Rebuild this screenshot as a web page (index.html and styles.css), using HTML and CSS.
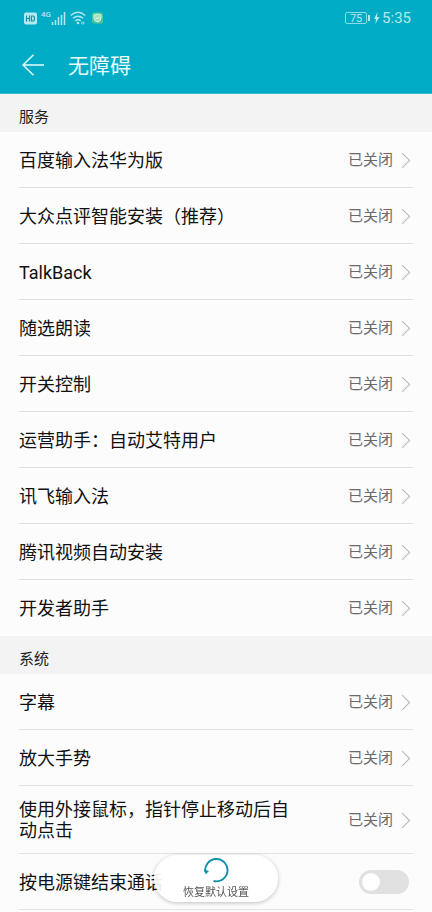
FILE: index.html
```html
<!DOCTYPE html>
<html lang="zh-CN">
<head>
<meta charset="utf-8">
<meta name="viewport" content="width=device-width, initial-scale=1">
<title>无障碍</title>
<link rel="stylesheet" href="styles.css">
</head>
<body>
<header class="top">
  <div class="status">
    <div class="status-left">
      <svg width="13" height="13" viewBox="0 0 13 13"><rect y=".5" width="13" height="12" rx="2" fill="#b5e8f0"/><path d="M2.500 3.500v6M5.500 3.500v6M2.500 6.500h3M7.500 4v5h1.500q1.500 0 1.500-2.500t-1.500-2.500z" fill="none" stroke="#1593a6" stroke-width="1.200"/></svg>
      <span class="network"><span class="gen">4G</span><svg width="15" height="14" viewBox="0 0 15 14"><path d="M1.500 11v3M4.500 9v5M7.500 6v8M10.500 4v10M13.500 1v13" stroke="#b5e8f0" stroke-width="1.500"/></svg></span>
      <svg class="wifi" width="16" height="14" viewBox="0 0 16 14"><g fill="none" stroke="#b5e8f0" stroke-width="1.400"><path d="M.7 4.500q7.300-6.500 14.600 0M3 7.300q5-4.300 10 0M5.300 10q2.700-2.300 5.400 0"/></g><circle cx="8" cy="12" r="1.300" fill="#b5e8f0"/><path d="M11 12l1.300-2v4zM13.300 10v4l1.300-2z" fill="#b5e8f0"/></svg>
      <svg width="11" height="12" viewBox="0 0 11 12"><rect y=".5" width="11" height="11" rx="2" fill="#4fc49a"/><path d="M5.500 2l3.500 1v3q0 3-3.500 4Q2 9 2 6V3z" fill="#9fe0bd" stroke="#d9f5e4" stroke-width="1"/><path d="M4 5.500l1.300 1.500L7.300 5" fill="none" stroke="#eefaf2"/></svg>
    </div>
    <div class="status-right">
      <span class="battery">75</span>
      <svg width="7" height="12" viewBox="0 0 7 12"><path d="M4.500 0L1 7h2l-.7 5L6.500 5H4z" fill="#b5e8f0"/></svg>
      <time class="clock">5:35</time>
    </div>
  </div>
  <div class="appbar">
    <button class="back" type="button" aria-label="返回"><svg width="22" height="22" viewBox="0 0 22 22"><path d="M11.500.8L1 11l10.500 10.200M1 11h21" fill="none" stroke="#e8fbfd" stroke-width="1.500"/></svg></button>
    <h1>无障碍</h1>
  </div>
</header>
<main>
  <section>
    <h2>服务</h2>
    <ul>
      <li><a class="row" href="#"><span class="label">百度输入法华为版</span><span class="value">已关闭</span></a></li>
      <li><a class="row" href="#"><span class="label">大众点评智能安装（推荐）</span><span class="value">已关闭</span></a></li>
      <li><a class="row" href="#"><span class="label">TalkBack</span><span class="value">已关闭</span></a></li>
      <li><a class="row" href="#"><span class="label">随选朗读</span><span class="value">已关闭</span></a></li>
      <li><a class="row" href="#"><span class="label">开关控制</span><span class="value">已关闭</span></a></li>
      <li><a class="row" href="#"><span class="label">运营助手：自动艾特用户</span><span class="value">已关闭</span></a></li>
      <li><a class="row" href="#"><span class="label">讯飞输入法</span><span class="value">已关闭</span></a></li>
      <li><a class="row" href="#"><span class="label">腾讯视频自动安装</span><span class="value">已关闭</span></a></li>
      <li><a class="row" href="#"><span class="label">开发者助手</span><span class="value">已关闭</span></a></li>
    </ul>
  </section>
  <section>
    <h2>系统</h2>
    <ul class="ruled">
      <li><a class="row" href="#"><span class="label">字幕</span><span class="value">已关闭</span></a></li>
      <li><a class="row" href="#"><span class="label">放大手势</span><span class="value">已关闭</span></a></li>
      <li><a class="row" href="#"><span class="label">使用外接鼠标，指针停止移动后自动点击</span><span class="value">已关闭</span></a></li>
      <li><label class="row"><span class="label">按电源键结束通话</span><input class="switch" type="checkbox" role="switch"></label></li>
    </ul>
  </section>
</main>
<button class="restore" type="button">
  <svg width="26" height="26" viewBox="0 0 26 26"><path d="M2.300 15A11.200 11.200 0 1 1 10.500 24" fill="none" stroke="#168fa8" stroke-width="1.900"/><path d="M1.200 12.500l4.800 1.500-3.300 3.500z" fill="#168fa8"/></svg>
  <span>恢复默认设置</span>
</button>
</body>
</html>
```
FILE: styles.css
```css
* {
  box-sizing: border-box;
}

body {
  margin: 0;
  background: #fcfcfc;
  color: #111;
  font-family: Roboto, "Noto Sans CJK SC", sans-serif;
}

button {
  padding: 0;
  border: 0;
  background: none;
  font: inherit;
}

svg {
  display: block;
}

.top {
  background: #00acc5;
  border-bottom: 1px solid #35bccf;
}

.status {
  display: flex;
  justify-content: space-between;
  align-items: center;
  height: 36px;
  padding: 0 21px 0 24px;
  color: #b5e8f0;
}

.status-left,
.status-right {
  display: flex;
  align-items: center;
  gap: 4px;
}

.status-right {
  gap: 2px;
}

.network {
  display: flex;
}

.gen {
  font-size: 8px;
  font-weight: 500;
  line-height: 8px;
}

.wifi {
  margin-right: 2px;
}

.battery {
  position: relative;
  width: 22px;
  height: 12px;
  margin-right: 4px;
  border: 1px solid #8adbe6;
  border-radius: 2px;
  font-size: 11px;
  line-height: 11px;
  text-align: center;
}

.battery::after {
  content: "";
  position: absolute;
  top: 2px;
  right: -4px;
  width: 2px;
  height: 6px;
  background: #b5e8f0;
}

.clock {
  font-size: 15px;
  line-height: 16px;
}

.appbar {
  display: flex;
  align-items: center;
  gap: 24px;
  height: 57px;
  padding: 0 22px;
}

h1 {
  margin: 0;
  padding-top: 2px;
  color: #e8fbfd;
  font-size: 21px;
  font-weight: 400;
  line-height: 28px;
}

h2 {
  margin: 0;
  padding: 12px 19px 4px;
  background: #f3f3f3;
  color: #222;
  font-size: 15px;
  font-weight: 400;
  line-height: 22px;
}

ul {
  margin: 0;
  padding: 0 19px;
  list-style: none;
}

li {
  border-bottom: 1px solid #e2e2e2;
}

ul:not(.ruled) li:last-child {
  border-color: transparent;
}

.row {
  display: flex;
  align-items: center;
  min-height: 55px;
  padding: 13px 0 12px;
  color: inherit;
  text-decoration: none;
}

.label {
  flex: 1;
  margin-right: 46px;
  font-size: 18px;
  line-height: 21px;
}

.value {
  display: flex;
  align-items: center;
  gap: 4px;
  padding-right: 5px;
  color: #6a6a6a;
  font-size: 15px;
  line-height: 22px;
}

.value::after {
  content: "";
  width: 10px;
  height: 10px;
  border: solid #b4b4b4;
  border-width: 1px 1px 0 0;
  transform: rotate(45deg);
}

.switch {
  appearance: none;
  width: 50px;
  height: 24px;
  margin: 0 4px 0 0;
  padding: 3px;
  border-radius: 12px;
  background: #e1e1e1;
}

.switch::before {
  content: "";
  display: block;
  width: 18px;
  height: 18px;
  border-radius: 50%;
  background: #fff;
}

.switch:checked {
  background: #00acc5;
}

.switch:checked::before {
  margin-left: auto;
}

.restore {
  position: fixed;
  bottom: 10px;
  left: 50%;
  display: flex;
  flex-direction: column;
  align-items: center;
  gap: 2px;
  width: 124px;
  height: 47px;
  padding-top: 2px;
  border-radius: 24px;
  background: rgba(255, 255, 255, 0.92);
  box-shadow: 0 1px 4px rgba(0, 0, 0, 0.25);
  color: #555;
  font-size: 11px;
  line-height: 16px;
  transform: translateX(-50%);
}
```
